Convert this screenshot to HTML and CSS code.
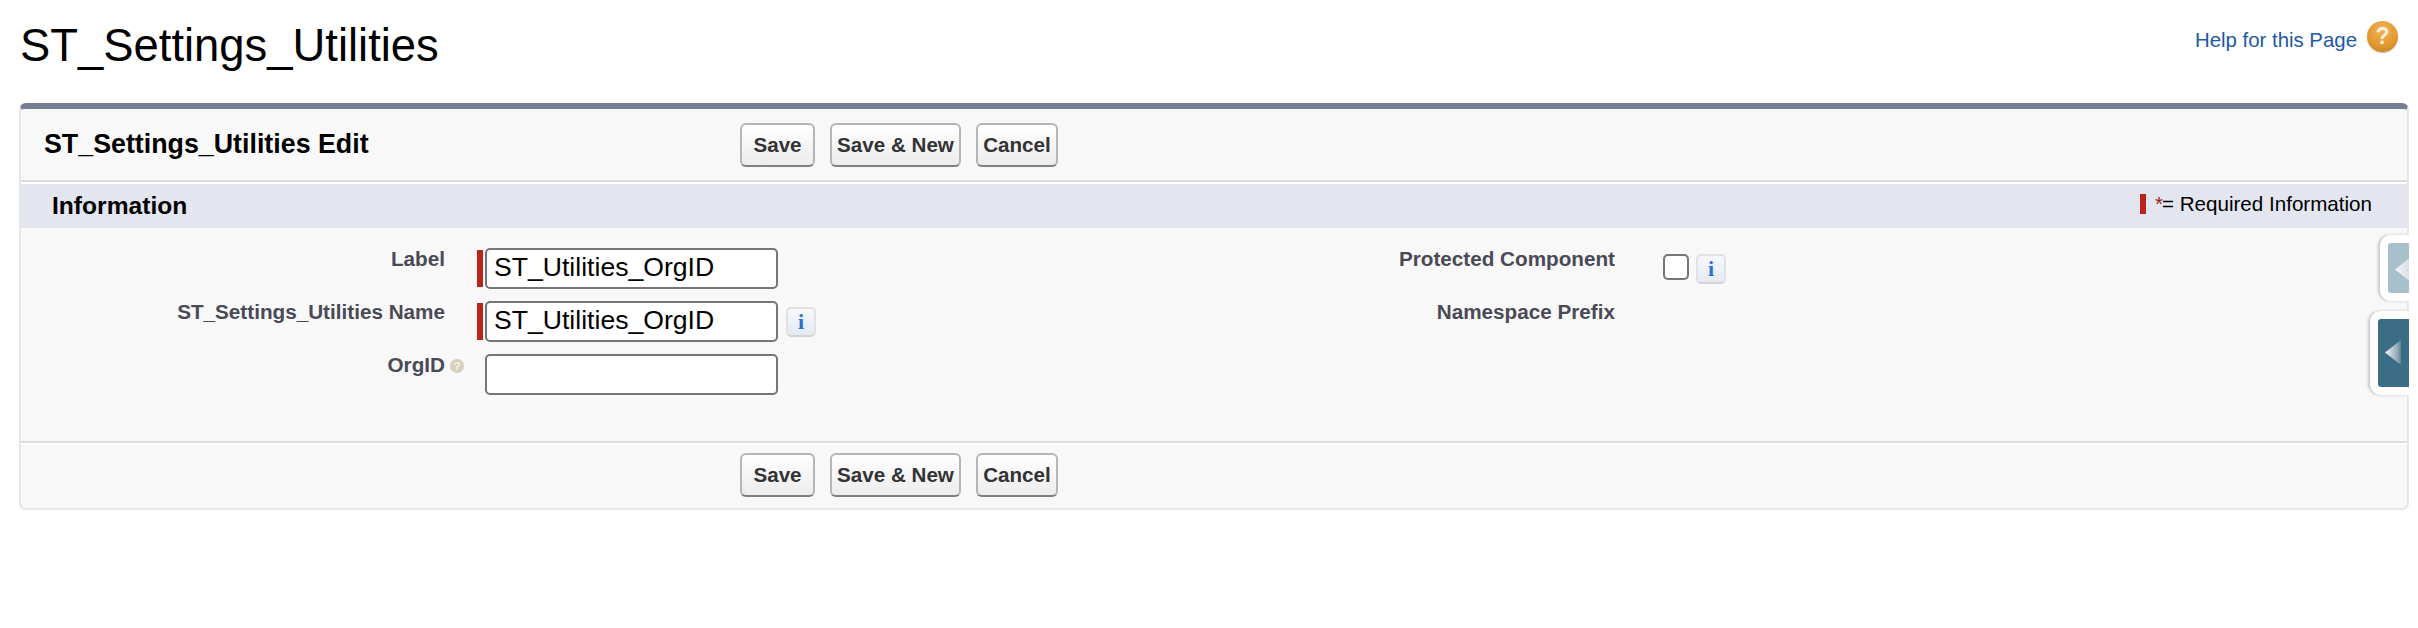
FILE: index.html
```html
<!DOCTYPE html>
<html lang="en">
<head>
<meta charset="utf-8">
<title>ST_Settings_Utilities</title>
<link rel="stylesheet" href="styles.css">
</head>
<body>
<header class="page-head">
  <h1 class="page-title">ST_Settings_Utilities</h1>
  <a class="help-link" href="#">Help for this Page<span class="help-orb">?</span></a>
</header>
<main class="card">
  <div class="card-head">
    <h2 class="card-title">ST_Settings_Utilities Edit</h2>
    <div class="btn-row">
      <button class="btn btn-save">Save</button>
      <button class="btn btn-new">Save &amp; New</button>
      <button class="btn btn-cancel">Cancel</button>
    </div>
  </div>
  <div class="section-head">
    <h3 class="section-title">Information</h3>
    <div class="req-note"><span class="req-bar"></span><span class="req-star">*</span><span class="req-text">= Required Information</span></div>
  </div>
  <div class="form-grid">
    <div class="f-label">Label</div>
    <div class="f-value"><span class="req-mark"></span><input class="text-input" type="text" value="ST_Utilities_OrgID"></div>
    <div class="f-label">Protected Component</div>
    <div class="f-value f-value-right"><input class="check" type="checkbox"><span class="info-btn">i</span></div>

    <div class="f-label">ST_Settings_Utilities Name</div>
    <div class="f-value"><span class="req-mark"></span><input class="text-input" type="text" value="ST_Utilities_OrgID"><span class="info-btn info-after">i</span></div>
    <div class="f-label">Namespace Prefix</div>
    <div class="f-value f-value-right"></div>

    <div class="f-label f-label-help">OrgID<span class="mini-help">?</span></div>
    <div class="f-value"><span class="req-gap"></span><input class="text-input" type="text"></div>
    <div class="f-label"></div>
    <div class="f-value f-value-right"></div>
  </div>
  <div class="card-foot">
    <div class="btn-row">
      <button class="btn btn-save">Save</button>
      <button class="btn btn-new">Save &amp; New</button>
      <button class="btn btn-cancel">Cancel</button>
    </div>
  </div>
  <div class="tab tab-back"><span class="tab-fill"><span class="tab-arrow"></span></span></div>
  <div class="tab tab-front"><span class="tab-fill"><span class="tab-arrow"></span></span></div>
</main>
</body>
</html>
```
FILE: styles.css
```css
* { box-sizing: border-box; }
html, body { margin: 0; padding: 0; background: #fff; }
body { font-family: "Liberation Sans", Arial, sans-serif; width: 2418px; height: 628px; overflow: hidden; }

.page-head { display: flex; justify-content: space-between; align-items: flex-start; height: 103px; padding: 0 20px 0 20px; }
.page-title { margin: 18px 0 0; font-size: 45.4px; line-height: 56px; font-weight: 400; color: #000; }
.help-link { display: flex; align-items: flex-start; margin-top: 21px; color: #2059a8; font-size: 20.4px; line-height: 39px; text-decoration: none; }
.help-orb { display: block; width: 31px; height: 31px; margin-left: 10px; border-radius: 50%; text-align: center; font-size: 23px; line-height: 31px; font-weight: 700; color: #fbeeda;
  background: radial-gradient(circle at 50% 30%, #f0b35a 0%, #e39a30 55%, #bf7c20 100%); box-shadow: 0 1px 1px rgba(120,80,20,.4); }

.card { position: relative; width: 2390px; height: 407px; margin-left: 19px; background: #f8f8f8; border: 2px solid #e6e6e6; border-top: 6px solid #777d92; border-radius: 7px; }

.card-head { display: flex; align-items: center; height: 73px; border-bottom: 2px solid #dcdcdc; box-shadow: 0 2px 0 #fff; }
.card-title { width: 719px; margin: -2px 0 0; padding-left: 23px; font-size: 26.8px; line-height: 30px; font-weight: 700; color: #000; }
.btn-row { display: flex; gap: 15px; }
.btn { height: 44px; padding: 0; background: linear-gradient(#fff, #ececec); border: 2px solid #b5b5b5; border-bottom-color: #7f7f7f; border-radius: 6px; font-family: "Liberation Sans", Arial, sans-serif; font-size: 20.6px; font-weight: 700; color: #333; }
.btn-save { width: 75px; }
.btn-new { width: 131px; }
.btn-cancel { width: 82px; }

.section-head { display: flex; justify-content: space-between; align-items: center; height: 44px; margin-top: 2px; padding: 0 35px 0 31px; background: #e3e6ef; }
.section-title { margin: 0; font-size: 24.6px; line-height: 30px; font-weight: 700; color: #000; }
.req-note { display: flex; align-items: center; font-size: 20.6px; color: #000; margin-top: -5px; }
.req-bar { display: block; width: 6px; height: 20px; margin-right: 9px; background: #bb2418; }
.req-star { color: #9a1b1b; margin-right: -1px; }

.form-grid { display: grid; grid-template-columns: 424px 662px 508px 1fr; grid-auto-rows: 41px; row-gap: 12px; padding: 20px 0 46px; }
.f-label { padding-top: 0; text-align: right; font-size: 20.7px; line-height: 22px; font-weight: 700; color: #4a4a56; }
.f-label-help { display: flex; justify-content: flex-end; margin-right: -19px; }
.mini-help { display: block; width: 14px; height: 14px; margin: 5px 0 0 5px; border-radius: 50%; background: #d8d0bf; color: #f7f5ef; font-size: 11px; line-height: 14px; text-align: center; font-weight: 700; }
.f-value { display: flex; align-items: flex-start; padding-left: 32px; }
.f-value-right { padding-left: 48px; padding-top: 6px; }
.req-mark { display: block; width: 6px; height: 37px; margin-top: 2px; margin-right: 2px; background: #bb2418; }
.req-gap { display: block; width: 8px; }
.text-input { width: 293px; height: 41px; margin: 0; padding: 0 7px 3px; background: #fff; border: 2px solid #767676; border-radius: 5px; font-family: "Liberation Sans", Arial, sans-serif; font-size: 26.6px; color: #000; outline: 0; }
.check { appearance: none; width: 26px; height: 26px; margin: 0 7px 0 0; background: #fff; border: 2px solid #767676; border-radius: 5px; }
.info-btn { display: block; width: 30px; height: 30px; border: 2px solid #e2e2e2; border-bottom-color: #d4d4d4; border-radius: 5px; background: linear-gradient(#f6f8fc, #e4eaf4); text-align: center; font-family: "Liberation Serif", serif; font-size: 22px; line-height: 26px; font-weight: 700; color: #2f6fd0; }
.info-after { margin: 6px 0 0 8px; }

.card-foot { height: 67px; padding: 10px 0 0 719px; border-top: 2px solid #dcdcdc; box-shadow: inset 0 2px 0 #fff; }

.tab { position: absolute; right: -2px; background: #fff; border-radius: 11px 0 0 11px; padding: 8px 0 8px 8px; box-shadow: -2px 0 3px rgba(0,0,0,.2); }
.tab-fill { display: block; position: relative; height: 100%; overflow: hidden; border-radius: 3px 0 0 3px; }
.tab-arrow { position: absolute; display: block; width: 16px; height: 25px; clip-path: polygon(100% 0, 100% 100%, 0 50%); }
.tab-back { top: 126px; width: 29px; height: 66px; }
.tab-back .tab-fill { background: #a8c0cc; }
.tab-back .tab-arrow { left: 7px; top: 14px; background: linear-gradient(90deg, #f4f6f7, #d4dfe4); }
.tab-front { top: 202px; width: 39px; height: 84px; }
.tab-front .tab-fill { background: #3b6d87; }
.tab-front .tab-arrow { left: 7px; top: 21px; background: linear-gradient(90deg, #f2f4f5, #8fa6b3 80%, #5c8399); }
```
